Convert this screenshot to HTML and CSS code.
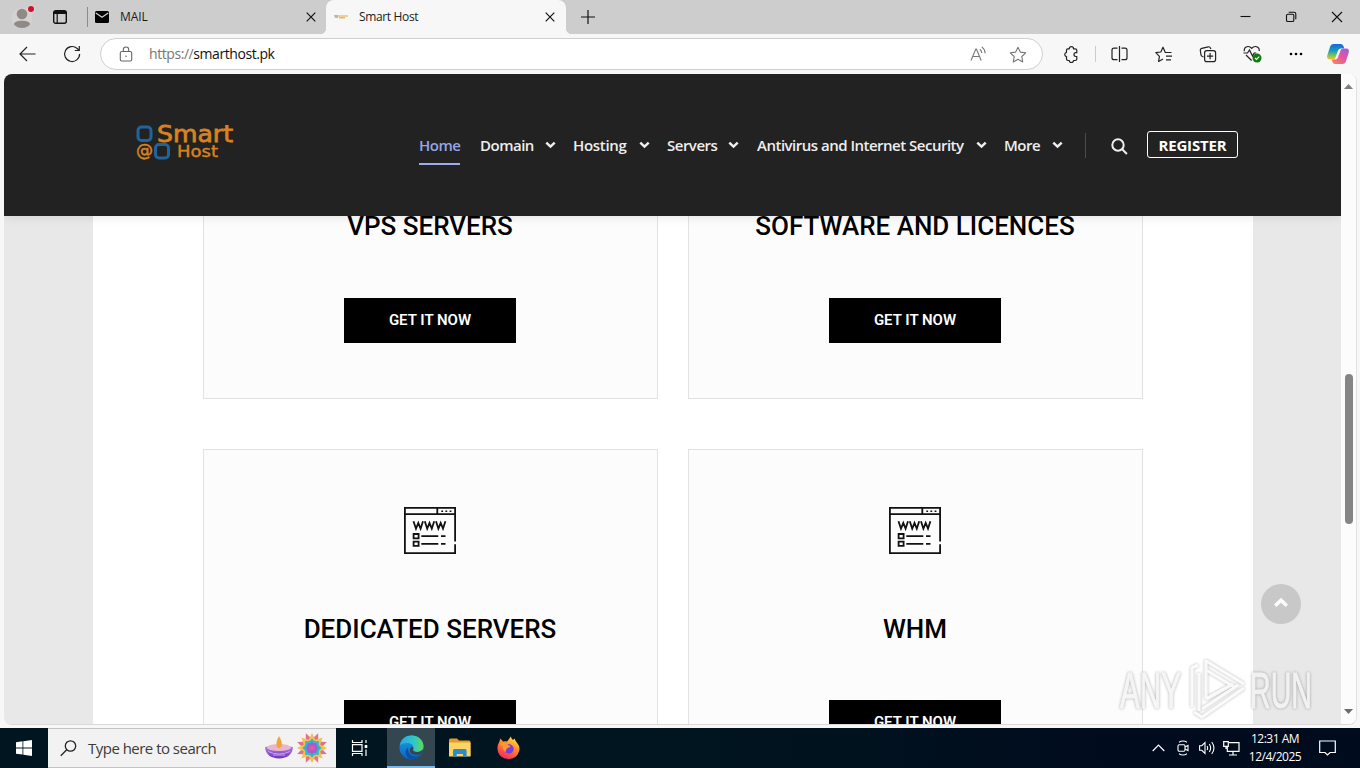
FILE: index.html
```
<!DOCTYPE html>
<html lang="en">
<head>
<meta charset="utf-8">
<title>Smart Host</title>
<link rel="stylesheet" href="styles.css">
</head>
<body>
<svg class="defs" width="0" height="0">
  <defs>
    <linearGradient id="cpA" x1="0" y1="0" x2="0" y2="1"><stop offset="0" stop-color="#1766d8"/><stop offset=".45" stop-color="#189ec0"/><stop offset=".75" stop-color="#8cc152"/><stop offset="1" stop-color="#f6c52c"/></linearGradient>
    <linearGradient id="cpB" x1="1" y1="0" x2="0" y2="1"><stop offset="0" stop-color="#9b5be8"/><stop offset=".5" stop-color="#e7569e"/><stop offset="1" stop-color="#fb8b4d"/></linearGradient>
    <linearGradient id="edA" x1="0" y1="0" x2="1" y2="0"><stop offset="0" stop-color="#2aa7e0"/><stop offset=".55" stop-color="#2cc6cf"/><stop offset="1" stop-color="#5ed957"/></linearGradient>
    <linearGradient id="edB" x1="0" y1="0" x2="0" y2="1"><stop offset="0" stop-color="#1fa0e2"/><stop offset="1" stop-color="#0a62c2"/></linearGradient>
    <linearGradient id="ffA" x1=".8" y1="0" x2=".3" y2="1"><stop offset="0" stop-color="#ffe83f"/><stop offset=".45" stop-color="#ff8a2a"/><stop offset="1" stop-color="#f5255e"/></linearGradient>
    <linearGradient id="bowl" x1="0" y1="0" x2="0" y2="1"><stop offset="0" stop-color="#b884ea"/><stop offset="1" stop-color="#6d33bd"/></linearGradient>
    <symbol id="chev" viewBox="0 0 11 8"><path d="M1.300 1.700 5.500 5.600 9.700 1.700" fill="none" stroke="#eee" stroke-width="2.500"/></symbol>
    <symbol id="x" viewBox="0 0 10 10"><path d="M.7.7 9.3 9.3M9.3.7.7 9.3" fill="none" stroke="#111" stroke-width="1.2"/></symbol>
    <symbol id="www" viewBox="0 0 52 47">
      <g fill="none" stroke="#111" stroke-width="1.8">
        <path d="M51.1 34.500V.9H.9v45.200H51.1V37.200M1 7.200H51M33.300 1v6"/>
        <path d="M9.500 14.200 12 21.700 14.300 16 16.600 21.700 19 14.200M20.800 14.200 23.200 21.700 25.500 16 27.800 21.700 30.200 14.200M32 14.200 34.400 21.700 36.700 16 39 21.700 41.400 14.200"/>
        <path d="M9.600 27h5v4.300h-5zM9.600 34.600h5v4.300h-5zM17.300 29.200h17M37 29.200h4.500M17.300 36.800h17M37 36.800h4.500"/>
      </g>
      <path d="M37.300 3.400h1.800v1.500h-1.800zM41.400 3.400h1.800v1.500h-1.800zM45.600 3.400h1.800v1.500h-1.800z" fill="#111"/>
    </symbol>
  </defs>
</svg>

<div class="screen">
  <div class="tabstrip">
    <svg class="profile" width="26" height="26" viewBox="0 0 26 26"><circle cx="11" cy="14" r="10.500" fill="#d5d3d1"/><circle cx="11" cy="10" r="5.300" fill="#8f8a86"/><path d="M3 20.500c0-2.500 3-3.700 8-3.700s8 1.200 8 3.700c-2 2.500-5 3.500-8 3.500s-6-1-8-3.500z" fill="#8f8a86"/><circle cx="20" cy="5" r="4.200" fill="#d5d3d1"/><circle cx="20" cy="5" r="3" fill="#d0112b"/></svg>
    <svg class="workspaces" width="16" height="16" viewBox="0 0 16 16"><rect x="1.700" y="1.700" width="12.600" height="12.600" rx="2" fill="none" stroke="#111" stroke-width="1.400"/><path d="M1.700 5V3.500q0-1.800 1.800-1.800h9q1.800 0 1.800 1.800V5z" fill="#111"/><path d="M5.200 4v10" stroke="#111" stroke-width="1.200"/></svg>
    <div class="tab-sep"></div>
    <div class="tab tab-mail">
      <svg width="14" height="12" viewBox="0 0 14 12"><path d="M0 1.500Q0 0 1.500 0h11Q14 0 14 1.500v9q0 1.500-1.500 1.500h-11Q0 12 0 10.500z" fill="#000"/><path d="M.8 2 7 6.300 13.200 2" fill="none" stroke="#cdcdcd" stroke-width="1.300"/></svg>
      <span class="tab-title">MAIL</span>
      <svg class="close" width="10" height="10"><use href="#x"/></svg>
    </div>
    <div class="tab tab-active">
      <svg width="14" height="6" viewBox="0 0 14 6"><path d="M0 1h4v3H1z" fill="#b8b8ae"/><path d="M4 1h10v2H4z" fill="#f1cd91"/><path d="M5 3h6v1.500H5z" fill="#dcb886"/></svg>
      <span class="tab-title">Smart Host</span>
      <svg class="close" width="10" height="10"><use href="#x"/></svg>
    </div>
    <svg class="newtab" width="14" height="14" viewBox="0 0 14 14"><path d="M7 0v14M0 7h14" stroke="#111" stroke-width="1.200"/></svg>
    <div class="win">
      <svg width="11" height="11" viewBox="0 0 11 11"><path d="M.5 5.500h10" stroke="#111" stroke-width="1.100"/></svg>
      <svg width="12" height="12" viewBox="0 0 12 12" fill="none" stroke="#111" stroke-width="1.100"><rect x="1.500" y="3.200" width="7.300" height="7.300" rx="1.300"/><path d="M3.700 1.300H9Q10.800 1.300 10.800 3v5.300"/></svg>
      <svg width="12" height="12" viewBox="0 0 12 12"><path d="M1 1l10 10M11 1 1 11" stroke="#111" stroke-width="1.100"/></svg>
    </div>
  </div>

  <div class="toolbar">
    <svg class="back" width="17" height="16" viewBox="0 0 17 16" fill="none" stroke="#222" stroke-width="1.200"><path d="M16.500 8H1M8 1 1 8l7 7"/></svg>
    <svg class="reload" width="18" height="18" viewBox="0 0 18 18" fill="none" stroke="#222" stroke-width="1.200"><path d="M16.600 8.900a7.500 7.500 0 1 1-2.400-5.400L16 5.200M16.300 1v4.500h-4.500"/></svg>
    <div class="address">
      <svg class="lock" width="14" height="16" viewBox="0 0 14 16" fill="none" stroke="#666" stroke-width="1.100"><rect x="1.300" y="5.500" width="11.400" height="9.500" rx="1.500"/><path d="M4.300 5.500V3.700a2.700 2.700 0 0 1 5.400 0v1.800"/><circle cx="7" cy="10.200" r=".8" fill="#666" stroke="none"/></svg>
      <span class="url"><span class="proto">https://</span>smarthost.pk</span>
      <svg class="read" width="17" height="16" viewBox="0 0 17 16" fill="none" stroke="#777" stroke-width="1.100"><path d="M1 14.500 5.800 3h.6l4.800 11.500M2.900 10.500h6.400M9.800 3.200q2 1.500 2 3.800M11.800.9q3.300 2.500 3.300 6.300"/></svg>
      <svg class="star" width="18" height="17" viewBox="0 0 18 17" fill="none" stroke="#777" stroke-width="1.100" stroke-linejoin="round"><path d="m9 1.200 2.300 4.900 5.400.7-3.900 3.700.9 5.400L9 13.300l-4.700 2.600.9-5.400L1.300 6.800l5.400-.7z"/></svg>
    </div>
    <svg class="t-ext" width="16" height="17" viewBox="0 0 16 17" fill="none" stroke="#222" stroke-width="1.200" stroke-linejoin="round"><path d="M3.500 4q0-1.200 1.200-1.200h1.600a2.100 2.100 0 0 1 4.200 0H12q1.800 0 1.800 1.400v2.500h-.9a1.900 1.900 0 0 0 0 3.800h.9v2.600q0 1.400-1.600 1.400h-1.700a2.100 2.100 0 0 1-4.200 0H5q-1.500 0-1.500-1.400v-2.500a2.200 2.200 0 0 1 0-4.300z"/></svg>
    <div class="t-sep"></div>
    <svg class="t-split" width="17" height="16" viewBox="0 0 17 16" fill="none" stroke="#222" stroke-width="1.200"><path d="M6.500 2.200H3Q1 2.200 1 4.200v7.500q0 2 2 2h3.500M10.500 2.200H14q2 0 2 2v7.500q0 2-2 2h-3.500M8.500 0v16"/></svg>
    <svg class="t-fav" width="18" height="17" viewBox="0 0 18 17" fill="none" stroke="#222" stroke-width="1.200" stroke-linejoin="round"><path d="M16.500 6.500H10.300L8 1.200 5.800 6l-5 .7 3.600 3.600-.8 5.200L8 13M11 10.200h6M11 13.800h5"/></svg>
    <svg class="t-coll" width="18" height="18" viewBox="0 0 18 18" fill="none" stroke="#222" stroke-width="1.200"><path d="M4.500 11.900 3.400 11.500Q2.300 11 2 9.800L1.300 5.500Q1 3.700 2.800 3.300L9.300 1.800q1.600-.3 2.300 1.500l.2.900"/><rect x="5.600" y="5.600" width="11" height="11" rx="2.200"/><path d="M11.100 8v6.200M8 11.100h6.200"/></svg>
    <svg class="t-heart" width="19" height="18" viewBox="0 0 19 18" fill="none" stroke="#222" stroke-width="1.200"><path d="M1.200 6.200Q1 2 4.800 1.500 7 1.300 8.700 3.300 10.500 1.300 12.600 1.500 16.500 2 16.300 6M3 10l5.600 5.500M.5 8h4l2-3 3 6 1.700-3h2"/><circle cx="14" cy="13" r="4.500" fill="#107c10" stroke="none"/><path d="m12 13 1.500 1.500 2.700-2.800" stroke="#fff"/></svg>
    <svg class="t-dots" width="14" height="4" viewBox="0 0 14 4"><circle cx="2" cy="2" r="1.300"/><circle cx="7" cy="2" r="1.300"/><circle cx="12" cy="2" r="1.300"/></svg>
    <svg class="t-copilot" width="22" height="20" viewBox="0 0 22 20"><path d="M6.500 0h7.300q2.200 0 2.900 2.500l.6 2h-3.500q-2 0-2.700 2L8.300 14q-.6 1.500-2.500 1.500H2.500Q-.8 15.500.4 11L3 3Q4 0 6.500 0z" fill="url(#cpA)"/><path d="M15.500 20H8.200q-2.200 0-2.900-2.500l-.6-2h3.500q2 0 2.700-2L13.700 6q.6-1.500 2.500-1.500h3.300q3.300 0 2.100 4.500L19 17q-1 3-3.500 3z" fill="url(#cpB)"/></svg>
  </div>

  <div class="viewport">
    <div class="page">
      <header class="site-header">
        <svg class="logo" width="100" height="38" viewBox="0 0 100 38">
          <g fill="none" stroke="#22639c" stroke-width="3"><rect x="2" y="3" width="13" height="13.500" rx="3.500"/><rect x="19.500" y="20.500" width="13" height="13.500" rx="3.500"/></g>
          <text class="logo-at" x="0" y="32" textLength="17" lengthAdjust="spacingAndGlyphs">@</text>
          <text class="logo-smart" x="21" y="17.500" textLength="76" lengthAdjust="spacingAndGlyphs">Smart</text>
          <text class="logo-host" x="41" y="32.500" textLength="41" lengthAdjust="spacingAndGlyphs">Host</text>
        </svg>
        <nav class="nav">
          <a class="n-home">Home</a>
          <a class="n-domain">Domain<svg width="11" height="8"><use href="#chev"/></svg></a>
          <a class="n-hosting">Hosting<svg width="11" height="8"><use href="#chev"/></svg></a>
          <a class="n-servers">Servers<svg width="11" height="8"><use href="#chev"/></svg></a>
          <a class="n-anti">Antivirus and Internet Security<svg width="11" height="8"><use href="#chev"/></svg></a>
          <a class="n-more">More<svg width="11" height="8"><use href="#chev"/></svg></a>
        </nav>
        <div class="nav-sep"></div>
        <svg class="search" width="17" height="17" viewBox="0 0 17 17" fill="none" stroke="#eee" stroke-width="2"><circle cx="7" cy="7" r="5.700"/><path d="m11.200 11.200 4.700 4.800"/></svg>
        <a class="register">REGISTER</a>
      </header>
      <main class="content">
        <div class="container">
          <section class="card upper"><svg width="52" height="47"><use href="#www"/></svg><h3>VPS SERVERS</h3><a class="btn">GET IT NOW</a></section>
          <section class="card upper"><svg width="52" height="47"><use href="#www"/></svg><h3>SOFTWARE AND LICENCES</h3><a class="btn">GET IT NOW</a></section>
          <section class="card"><svg width="52" height="47"><use href="#www"/></svg><h3>DEDICATED SERVERS</h3><a class="btn">GET IT NOW</a></section>
          <section class="card"><svg width="52" height="47"><use href="#www"/></svg><h3>WHM</h3><a class="btn">GET IT NOW</a></section>
        </div>
      </main>
    </div>
    <div class="scrollbar">
      <svg width="9" height="5" viewBox="0 0 9 5"><path d="M0 5 4.500 0 9 5z" fill="#7d7d7d"/></svg>
      <div class="thumb"></div>
      <svg class="down" width="9" height="5" viewBox="0 0 9 5"><path d="M0 0h9L4.500 5z" fill="#6d6d6d"/></svg>
    </div>
    <div class="to-top"><svg width="16" height="11" viewBox="0 0 16 11"><path d="M2.200 8.800 8 3.200l5.800 5.600" fill="none" stroke="#fff" stroke-width="3.400"/></svg></div>
    <svg class="watermark" width="204" height="70" viewBox="0 0 204 70">
      <g class="wm-text"><text x="6" y="53" textLength="61" lengthAdjust="spacingAndGlyphs">ANY</text><text x="136" y="53" textLength="62" lengthAdjust="spacingAndGlyphs">RUN</text></g>
      <g class="wm-mark" fill="none" stroke-linejoin="round">
        <path d="M78 52V13l6-3M85 56V18M92 44V6l38 23M92 15l30 18M92 44l27-15M80 57l8 5 42-29M88 54l36-24" stroke="#fff" stroke-opacity=".9" stroke-width="3.200"/>
      </g>
    </svg>
  </div>

  <div class="taskbar">
    <div class="start"><svg width="16" height="16" viewBox="0 0 16 16" fill="#fff"><path d="M0 2.300 6.500 1.300v6.200H0zM7.300 1.200 16 0v7.500H7.300zM0 8.400h6.500v6.200L0 13.700zM7.300 8.400H16V16l-8.700-1.200z"/></svg></div>
    <div class="searchbox">
      <svg class="glass" width="17" height="17" viewBox="0 0 17 17" fill="none" stroke="#222" stroke-width="1.300"><circle cx="10.500" cy="6" r="5.200"/><path d="M6.700 9.800.8 15.700"/></svg>
      <span class="hint">Type here to search</span>
      <svg class="diya" width="28" height="24" viewBox="0 0 28 24"><path d="M0 11Q14 8 28 11 27 22 14 22.500 1 22 0 11z" fill="url(#bowl)"/><ellipse cx="14" cy="11.500" rx="12" ry="3.600" fill="#e9b7c9"/><path d="M14 0q4 7 2.500 10.500-2 3.500-4.700 0Q10.500 6 14 0z" fill="#f2a33a"/><path d="M3 15.500q11 5 22 0M8 19h12" fill="none" stroke="#c9a0f1"/></svg>
      <svg class="rangoli" width="32" height="32" viewBox="-16 -16 32 32">
        <g fill="#e2708d"><path id="tip" d="M-3.500-8 0-16 3.500-8v16L0 16-3.500 8z" transform="rotate(22.500)"/><use href="#tip" transform="rotate(45)"/><use href="#tip" transform="rotate(90)"/><use href="#tip" transform="rotate(135)"/></g>
        <g fill="#f5c04e"><path id="ray" d="M-4-7 0-15 4-7V7L0 15-4 7z"/><use href="#ray" transform="rotate(45)"/><use href="#ray" transform="rotate(90)"/><use href="#ray" transform="rotate(135)"/></g>
        <g fill="#35b5cc"><rect x="-6.800" y="-6.800" width="13.600" height="13.600"/><rect x="-6.800" y="-6.800" width="13.600" height="13.600" transform="rotate(45)"/></g>
        <g fill="#a45cd0"><rect x="-4.500" y="-4.500" width="9" height="9"/><rect x="-4.500" y="-4.500" width="9" height="9" transform="rotate(45)"/></g><circle r="2.800" fill="#e455a3"/>
      </svg>
    </div>
    <svg class="taskview" width="18" height="16" viewBox="0 0 18 16" fill="none" stroke="#fff" stroke-width="1.200"><path d="M1.500 0v2.500h9.500V0M1.500 16v-2.500h9.500V16M1.500 4.700h9.500v6.600H1.500zM15 0v3M15 9.500V16"/><path d="M13.700 5h2.600v3h-2.600z" fill="#fff" stroke="none"/></svg>
    <div class="edge-btn"><svg width="25" height="25" viewBox="0 0 25 25"><circle cx="12.500" cy="12.500" r="12" fill="url(#edB)"/><path d="M.8 10.500C2.200 3.500 7 .5 12.500.5c7 0 12 5 12 10.500 0 4-3 6-6.500 6-3 0-4.500-1-4-2.500 1-1.500.7-5.500-3.700-6.200C6 7.600 2.500 9 .8 10.500z" fill="url(#edA)"/><path d="M9.200 12.500c-1.200 5 3.300 9.500 8 9 2-.2 3.500-1 5-2-2.500 4-6.700 5.300-10 4.900-5-1.200-8-8.900-3-11.900z" fill="#0c50a3"/><path d="M14.200 14.500c-.5 1.500 1 2.500 4 2.500 2 0 4-.6 5.200-2.200l.6 1.200-2 3.300c-5 1.200-10.500.5-11.200-3.300-.3-2 1-4 2.700-4.200.8.700 1 1.900.7 2.700z" fill="#344650"/></svg></div>
    <svg class="explorer" width="22" height="20" viewBox="0 0 22 20"><path d="M0 2q0-1.500 1.500-1.500H8l2 2h10q1.500 0 1.500 1.500V18H0z" fill="#e59b25"/><path d="M0 4.500h21.500V18.500H0z" fill="#fad566"/><path d="M4 19v-6.500Q4 11 5.500 11h10.600q1.500 0 1.500 1.500V19H14v-3H7.700v3z" fill="#2e89cd"/></svg>
    <svg class="firefox" width="23" height="24" viewBox="0 0 23 24"><path d="M3.500 2.500 6 5.500Q8 5 10 5.500 12.500 2.500 13.800.5q.6 2 2.200 3.500l1.500-1.500q1 3 3 5Q23.500 11 22 15.500 19.500 23 11.500 23 3.500 23 1 16-.5 10 2 6.500z" fill="url(#ffA)"/><circle cx="12" cy="13" r="4.700" fill="#7b3fd8"/><path d="M3 8q5-3 8 1 2.500.8 2.500 2-2 0-3.500 1.500Q8.500 13.500 9 16 5 14 5.500 10z" fill="#ff9b2d"/></svg>
    <div class="tray">
      <svg class="up" width="13" height="8" viewBox="0 0 13 8" fill="none" stroke="#fff" stroke-width="1.200"><path d="M.7 7 6.500 1.200 12.300 7"/></svg>
      <svg class="meet" width="12" height="16" viewBox="0 0 12 16" fill="none" stroke="#fff" stroke-width="1.100"><rect x="1" y="4.700" width="7" height="6.500" rx="1.200"/><path d="M8 7l3-1.500v5L8 9M2 2.300Q6-.3 10 2.300M2 13.700q4 2.600 8 0"/></svg>
      <svg class="vol" width="17" height="14" viewBox="0 0 17 14" fill="none" stroke="#fff" stroke-width="1.100"><path d="M.6 4.700h2.200L6 1.500v11L2.800 9.300H.6zM8 5q1.300 2 0 4M10.300 3q2.700 4 0 8M12.700 1q4.500 6 0 12"/></svg>
      <svg class="net" width="17" height="15" viewBox="0 0 17 15" fill="none" stroke="#fff" stroke-width="1.200"><path d="M6 1.700h10v8.600H4.300V6M10 10.500v3.300M6 14h8M.7.700h4.600v4.600H.7zM3 5.300V8"/></svg>
      <div class="clock"><span class="time">12:31 AM</span><span class="date">12/4/2025</span></div>
      <svg class="action" width="17" height="16" viewBox="0 0 17 16" fill="none" stroke="#fff" stroke-width="1.200"><path d="M.7 1h15.600v11.500H11L8.500 15 6 12.500H.7z"/></svg>
    </div>
  </div>
</div>
</body>
</html>
```
FILE: styles.css
```
* { box-sizing: border-box; }
body { margin: 0; font-family: "Open Sans", "Noto Sans", sans-serif; }
svg { display: block; flex: none; }
.defs { position: absolute; }
.screen { width: 1360px; height: 768px; display: flex; flex-direction: column; overflow: hidden; background: #f7f7f7; }

/* Tab strip */
.tabstrip { height: 34px; flex: none; display: flex; align-items: center; background: #cdcdcd; }
.profile { margin-left: 11px; margin-top: -1px; }
.workspaces { margin-left: 15px; }
.tab-sep { width: 1px; height: 20px; margin-left: 19px; background: #8c8c8c; }
.tab { display: flex; align-items: center; font-size: 12px; color: #1b1b1b; white-space: nowrap; }
.tab-mail { width: 238px; padding-left: 7px; }
.tab-mail .tab-title { margin-left: 11px; letter-spacing: -0.1px; }
.tab-active { position: relative; width: 240px; height: 34px; padding-left: 8px; background: #f7f7f7; border-radius: 8px 8px 0 0; }
.tab-active::before, .tab-active::after { content: ""; position: absolute; bottom: 0; width: 6px; height: 6px; }
.tab-active::before { left: -6px; background: radial-gradient(circle at 0 0, transparent 6px, #f7f7f7 6.500px); }
.tab-active::after { right: -6px; background: radial-gradient(circle at 100% 0, transparent 6px, #f7f7f7 6.500px); }
.tab-active .tab-title { margin-left: 11px; letter-spacing: -0.350px; }
.tab-title { padding-bottom: 1px; }
.close { margin-left: auto; margin-right: 11px; }
.tab-mail .close { margin-right: 10px; }
.newtab { margin-left: 15px; }
.win { display: flex; gap: 34px; margin-left: auto; margin-right: 17px; }

/* Toolbar */
.toolbar { height: 40px; flex: none; display: flex; align-items: center; background: #f7f7f7; }
.back { margin-left: 19px; }
.reload { margin-left: 27px; }
.address { width: 943px; height: 32px; margin-left: 19px; display: flex; align-items: center; background: #fff; border: 1px solid #cfcfcf; border-radius: 16px; font-size: 14px; }
.lock { margin-left: 18px; }
.url { margin-left: 16px; padding-bottom: 1px; color: #111; letter-spacing: -0.430px; }
.proto { color: #767676; }
.read { margin-left: auto; }
.star { margin-left: 22px; margin-right: 15px; }
.t-ext { margin-left: 20px; }
.t-sep { width: 1px; height: 16px; margin-left: 16px; background: #ccc; }
.t-split { margin-left: 15px; }
.t-fav { margin-left: 27px; }
.t-coll { margin-left: 26px; }
.t-heart { margin-left: 26px; }
.t-dots { margin-left: 27px; }
.t-copilot { margin-left: 24px; }

/* Page viewport */
.viewport { position: relative; width: 1353px; height: 651px; margin: 0 0 3px 4px; flex: none; display: flex; overflow: hidden; border-radius: 8px; border-right: 1px solid #e2e2e2; border-bottom: 1px solid #dadada; background: #fcfcfc; }
.page { width: 1337px; display: flex; flex-direction: column; overflow: hidden; }
.site-header { position: relative; z-index: 1; height: 142px; flex: none; display: flex; align-items: center; background: #222; box-shadow: 0 1px 10px rgba(0, 0, 0, .1); color: #eee; }
.logo { margin: -4px 0 0 132px; font-family: "DejaVu Sans", sans-serif; fill: #d98220; stroke: #d98220; stroke-width: 0; }
.logo-smart { font-size: 23px; stroke-width: .8px; }
.logo-host { font-size: 15px; stroke-width: .4px; }
.logo-at { font-size: 17px; stroke-width: .5px; }
.nav { display: flex; margin-left: 183px; font-size: 15px; font-weight: 600; line-height: 20px; letter-spacing: -0.500px; white-space: nowrap; }
.nav a { display: flex; align-items: center; justify-content: space-between; height: 40px; flex: none; }
.n-home { width: 41px; color: #96a5e6; border-bottom: 2px solid #a0ace6; border-top: 2px solid transparent; }
.n-domain { width: 76px; margin-left: 20px; }
.n-hosting { width: 77px; margin-left: 17px; letter-spacing: -0.300px; }
.n-servers { width: 72px; margin-left: 17px; }
.n-anti { width: 230px; margin-left: 18px; }
.n-more { width: 59px; margin-left: 17px; }
.nav-sep { width: 1px; height: 25px; margin-left: 22px; background: #4c4c4c; }
.search { margin-left: 25px; margin-top: 3px; }
.register { width: 91px; height: 27px; margin-left: 19px; margin-top: -2px; padding-top: 1px; display: flex; align-items: center; justify-content: center; border: 1px solid #fff; border-radius: 3px; color: #fff; font-size: 15px; font-weight: 700; letter-spacing: -0.150px; }
.content { flex: 1; min-height: 0; overflow: hidden; background: #e8e8e8; }
.container { width: 1160px; height: 900px; margin-top: -170px; margin-left: 89px; padding: 0 110px; display: grid; grid-template-columns: 455px 455px; grid-auto-rows: 353px; gap: 50px 30px; background: #fff; }
.card { display: flex; flex-direction: column; align-items: center; padding: 57px 1px 0 0; background: #fcfcfc; border: 1px solid #e2e2e2; font-family: Roboto, sans-serif; }
.card h3 { margin: 60px 0 0; font-size: 26px; font-weight: 500; line-height: 30px; color: #000; white-space: nowrap; }
.btn { width: 172px; height: 45px; flex: none; margin-top: 56px; padding-bottom: 1px; display: flex; align-items: center; justify-content: center; background: #000; color: #fff; font-size: 15px; font-weight: 600; }
.upper .btn { margin-top: 57px; }

/* Scrollbar */
.scrollbar { width: 15px; flex: none; display: flex; flex-direction: column; align-items: center; padding-top: 10px; background: #fcfcfc; }
.thumb { width: 8px; height: 150px; margin-top: 285px; border-radius: 4px; background: #858585; }
.down { margin-top: 185px; }

/* Overlays */
.to-top { position: absolute; z-index: 2; left: 1257px; top: 510px; width: 40px; height: 40px; border-radius: 50%; background: #c8c8c8; display: flex; align-items: center; justify-content: center; padding-bottom: 3px; }
.watermark { position: absolute; z-index: 3; left: 1110px; top: 581px; filter: drop-shadow(0 0 1.500px rgba(0, 0, 0, .4)); opacity: .8; }
.wm-text { font-family: "Liberation Sans", sans-serif; font-size: 50px; fill: #f4f4f4; stroke: #f4f4f4; stroke-width: 1px; }

/* Taskbar */
.taskbar { height: 40px; flex: none; display: flex; align-items: center; background: linear-gradient(90deg, #00151f 0, #00151f 50%, #000b1e 85%, #000b1e 100%); color: #fff; }
.start { width: 48px; display: flex; justify-content: center; }
.searchbox { width: 288px; height: 40px; display: flex; align-items: center; background: #f2f2f2; border: 1px solid #c4c4c4; border-width: 1px 0; }
.glass { margin-left: 12px; }
.hint { margin-left: 11px; font-size: 15px; color: #3b3b3b; letter-spacing: -0.520px; white-space: nowrap; }
.diya { margin-left: auto; }
.rangoli { margin-left: 3px; margin-right: 8px; }
.taskview { margin-left: 15px; }
.edge-btn { width: 48px; height: 40px; margin-left: 18px; display: flex; align-items: center; justify-content: center; background: #344650; border-bottom: 2px solid #76b9ed; }
.explorer { margin-left: 14px; }
.firefox { margin-left: 26px; }
.tray { margin-left: auto; display: flex; align-items: center; }
.meet { margin-left: 12px; }
.vol { margin-left: 10px; }
.net { margin-left: 7px; }
.clock { width: 56px; margin-left: 7px; display: flex; flex-direction: column; align-items: center; font-size: 12px; line-height: 18px; letter-spacing: -0.500px; white-space: nowrap; }
.action { margin-left: 16px; margin-right: 24px; }
```
